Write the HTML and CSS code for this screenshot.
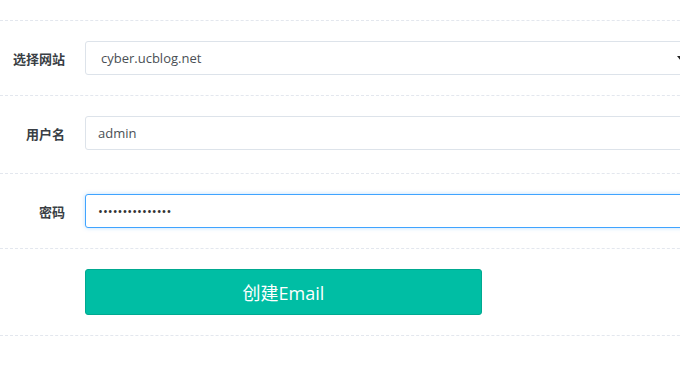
FILE: index.html
```html
<!DOCTYPE html>
<html lang="zh-CN">
<head>
    <meta charset="UTF-8">
    <meta name="viewport" content="width=device-width, initial-scale=1.0">
    <title>创建Email</title>
    <link rel="stylesheet" href="styles.css">
</head>
<body>
    <form class="email-form" onsubmit="return false">
        <div class="form-row">
            <label class="form-label">选择网站</label>
            <div class="form-field select-wrap">
                <select class="form-control form-select">
                    <option>cyber.ucblog.net</option>
                </select>
                <span class="select-caret"></span>
            </div>
        </div>

        <div class="form-row form-row-tall">
            <label class="form-label">用户名</label>
            <div class="form-field">
                <input class="form-control" type="text" value="admin">
            </div>
        </div>

        <div class="form-row">
            <label class="form-label">密码</label>
            <div class="form-field">
                <input class="form-control is-focused" type="password" value="123456789012345">
            </div>
        </div>

        <div class="form-row form-row-last">
            <span class="form-label"></span>
            <div class="form-field">
                <button class="submit-btn" type="submit">创建Email</button>
            </div>
        </div>
    </form>
</body>
</html>
```

FILE: styles.css
```css
* {
    margin: 0;
    padding: 0;
    box-sizing: border-box;
}

html, body {
    background: #fff;
    overflow: hidden;
}

body {
    font-family: 'Open Sans', 'Noto Sans CJK SC', sans-serif;
    color: #333;
    padding-top: 20px;
}

.email-form {
    width: 720px;
}

.form-row {
    display: flex;
    align-items: center;
    gap: 20px;
    padding: 20px 0;
    border-top: 1px dashed #e3e7ee;
}

.form-row-tall {
    padding-bottom: 23px;
}

.form-row-last {
    border-bottom: 1px dashed #e3e7ee;
}

.form-label {
    width: 65px;
    flex-shrink: 0;
    text-align: right;
    font-family: 'Noto Sans CJK SC', sans-serif;
    font-size: 13px;
    font-weight: bold;
    color: #3a3f45;
}

.form-field {
    flex: 1;
}

.form-control {
    display: block;
    width: 100%;
    height: 34px;
    padding: 0 12px;
    font-family: 'Open Sans', 'Noto Sans CJK SC', sans-serif;
    font-size: 13px;
    color: #4a4f55;
    background: #fff;
    border: 1px solid #dde3ea;
    border-radius: 3px;
    outline: none;
}

.form-control.is-focused {
    border-color: #40a4ff;
    box-shadow: 0 0 4px rgba(64, 164, 255, 0.35);
    color: #333;
}

.select-wrap {
    position: relative;
}

.form-select {
    appearance: none;
    -webkit-appearance: none;
    padding-left: 15px;
}

.select-caret {
    position: absolute;
    left: 592px;
    top: 15px;
    border-left: 4px solid transparent;
    border-right: 4px solid transparent;
    border-top: 5px solid #222;
}

.submit-btn {
    width: 397px;
    height: 46px;
    background: #00bea4;
    border: 1px solid #00a990;
    border-radius: 3px;
    color: #fff;
    font-family: 'Open Sans', 'Noto Sans CJK SC', sans-serif;
    font-size: 18px;
    cursor: pointer;
}
```
